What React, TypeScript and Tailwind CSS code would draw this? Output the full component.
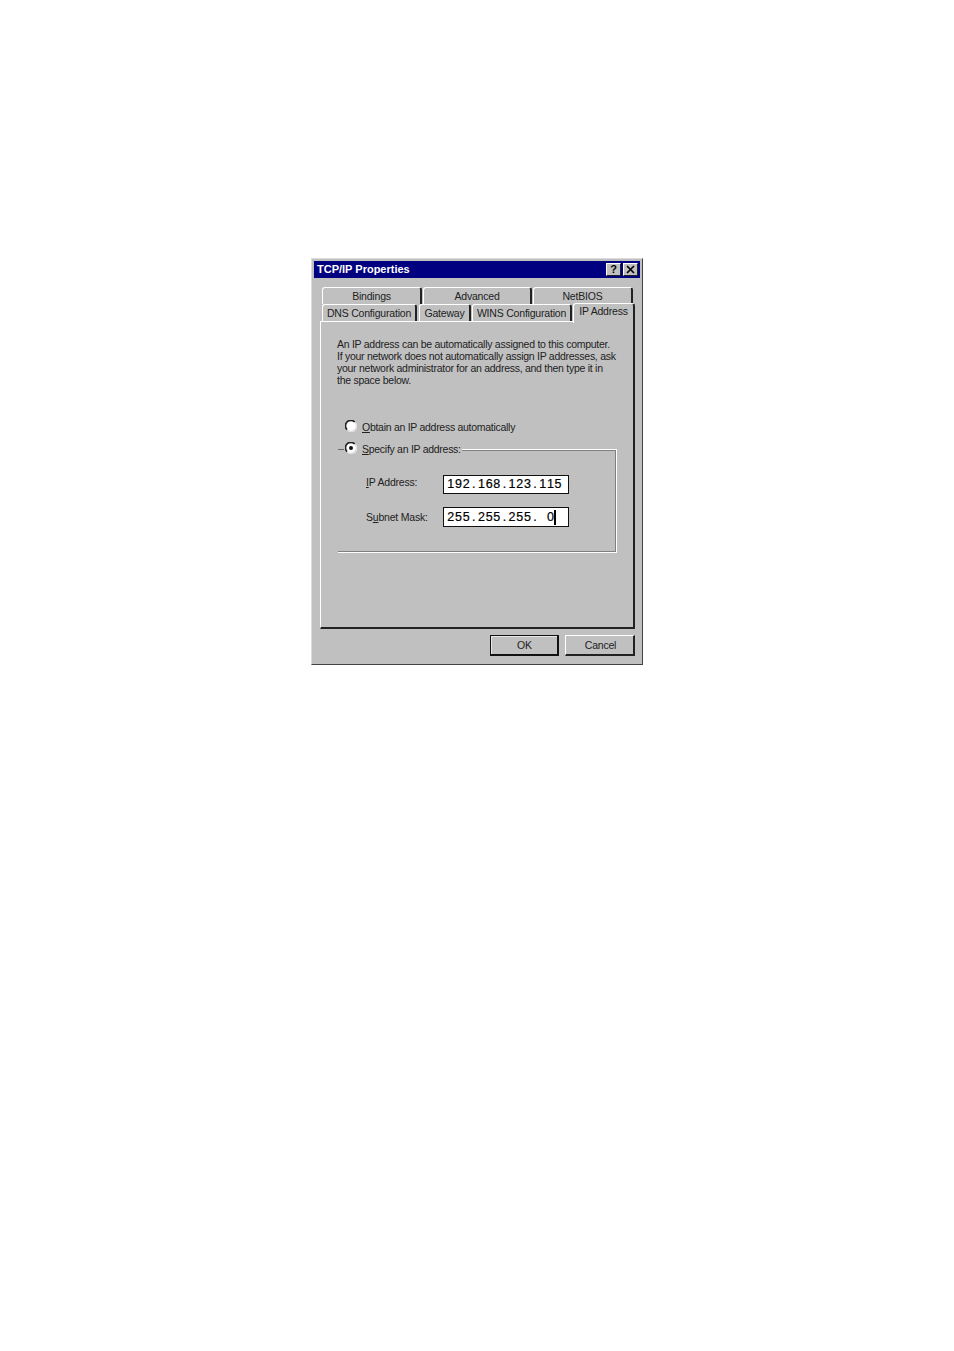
import React from "react";

function RowTab({ className, children }: { className: string; children: React.ReactNode }) {
  return (
    <div className={"flex shrink-0 justify-center whitespace-nowrap rounded-t-[3px] border-l border-r-2 border-t border-l-white border-r-[#222] border-t-white bg-[#c0c0c0] text-[10.5px] leading-none tracking-[-0.2px] text-[#222] " + className}>
      {children}
    </div>
  );
}

function Radio({ checked }: { checked?: boolean }) {
  return (
    <svg width="12" height="12" viewBox="0 0 12 12" className="-mt-[2px] shrink-0">
      <circle cx="6" cy="6" r="5" fill="#fff" />
      <path d="M2 9.6A5 5 0 0 1 9.6 2" fill="none" stroke="#222" strokeWidth="1.7" />
      <path d="M2.4 10.2A5 5 0 0 0 10.2 2.4" fill="none" stroke="#e4e4e4" strokeWidth="1.2" />
      {checked && <circle cx="6" cy="6" r="2" fill="#111" />}
    </svg>
  );
}

function IpValue({ value }: { value: string }) {
  return (
    <>
      {value.split("").map((c, i) => (
        <span key={i} className="inline-block w-[7.67px] text-center">{c === " " ? "\u00a0" : c}</span>
      ))}
    </>
  );
}

export default function App() {
  return (
    <div className="min-h-[1351px] bg-white pl-[311px] pt-[258px] font-['Liberation_Sans',Arial,sans-serif]">
      <div className="flex h-[407px] w-[332px] flex-col border border-b-[#444] border-l-[#dcdcdc] border-r-[#444] border-t-[#dcdcdc] bg-[#c0c0c0] px-[2px] pt-[2px]">
        <div className="flex h-[17px] shrink-0 items-center justify-between bg-[#000080] pl-[3px] pr-[2px]">
          <span className="text-[11px] font-bold leading-none text-white">TCP/IP Properties</span>
          <div className="flex gap-[2px]">
            <div className="flex h-[13px] w-[15px] items-center justify-center border border-b-[#222] border-l-white border-r-[#222] border-t-white bg-[#c0c0c0] text-[11px] font-bold leading-none text-black">?</div>
            <div className="flex h-[13px] w-[15px] items-center justify-center border border-b-[#222] border-l-white border-r-[#222] border-t-white bg-[#c0c0c0]">
              <svg width="9" height="9" viewBox="0 0 9 9"><path d="M1 1l7 7M8 1L1 8" stroke="#000" strokeWidth="1.7" /></svg>
            </div>
          </div>
        </div>

        <div className="ml-[8px] mt-[9px] flex h-[17px] shrink-0 gap-[1px]">
          <RowTab className="w-[100px] pt-[3px]">Bindings</RowTab>
          <RowTab className="w-[109px] pt-[3px]">Advanced</RowTab>
          <RowTab className="w-[100px] pt-[3px]">NetBIOS</RowTab>
        </div>
        <div className="relative z-10 ml-[8px] flex h-[17px] shrink-0 items-end">
          <RowTab className="h-[17px] w-[95px] pt-[3px]">DNS Configuration</RowTab>
          <RowTab className="ml-[2px] h-[17px] w-[52px] pt-[3px]">Gateway</RowTab>
          <RowTab className="ml-[1px] h-[17px] w-[100px] pt-[3px]">WINS Configuration</RowTab>
          <RowTab className="relative z-20 -mb-[2px] ml-[1px] h-[20px] w-[62px] pt-[2px]">IP Address</RowTab>
        </div>

        <div className="ml-[6px] flex h-[308px] w-[315px] shrink-0 flex-col border-b-2 border-l border-r-2 border-t border-b-[#222] border-l-white border-r-[#222] border-t-white pl-[16px] pt-[16px] text-[#222]">
          <p className="whitespace-nowrap text-[10.5px] leading-[12px] tracking-[-0.27px]">
            An IP address can be automatically assigned to this computer.<br />
            If your network does not automatically assign IP addresses, ask<br />
            your network administrator for an address, and then type it in<br />
            the space below.
          </p>
          <div className="ml-[8px] mt-[34px] flex h-[14px] items-center gap-[5px]">
            <Radio />
            <span className="whitespace-nowrap text-[10.5px] leading-[14px] tracking-[-0.28px]"><u>O</u>btain an IP address automatically</span>
          </div>
          <div className="relative ml-px mt-[15px] h-[104px] w-[279px] border border-l-0 border-white">
            <div className="h-full w-full border border-l-0 border-[#808080]">
              <div className="absolute -top-[8px] left-0 flex h-[14px] items-center bg-[#c0c0c0] pr-[1px]">
                <span className="h-px w-[6px] bg-[#666]" />
                <span className="ml-[1px] flex"><Radio checked /></span>
                <span className="ml-[5px] whitespace-nowrap text-[10.5px] leading-[14px] tracking-[-0.28px]"><u>S</u>pecify an IP address:</span>
              </div>
              <div className="ml-[28px] mt-[24px] flex items-center">
                <span className="-mt-[4px] w-[77px] whitespace-nowrap text-[10.5px] leading-none tracking-[-0.2px]"><u>I</u>P Address:</span>
                <div className="flex h-[19px] w-[126px] items-center whitespace-pre border border-[#111] bg-white pb-[1px] pl-[3px] text-[12.5px] leading-none text-black [-webkit-text-stroke:0.2px_black]"><IpValue value="192.168.123.115" /></div>
              </div>
              <div className="ml-[28px] mt-[13px] flex items-center">
                <span className="w-[77px] whitespace-nowrap text-[10.5px] leading-none tracking-[-0.2px]">S<u>u</u>bnet Mask:</span>
                <div className="flex h-[20px] w-[126px] items-center whitespace-pre border border-[#111] bg-white pl-[3px] text-[12.5px] leading-none text-black [-webkit-text-stroke:0.2px_black]"><IpValue value="255.255.255. 0" /><span className="h-[15px] w-[2px] bg-black" /></div>
              </div>
            </div>
          </div>
        </div>

        <div className="ml-[176px] mt-[6px] flex gap-[6px]">
          <div className="h-[21px] w-[69px] border border-b-2 border-r-2 border-[#111]">
            <div className="flex h-full w-full items-center justify-center border-l border-t border-l-[#e8e8e8] border-t-[#e8e8e8] text-[10.5px] text-[#222]">OK</div>
          </div>
          <div className="flex h-[21px] w-[70px] items-center justify-center border-b-2 border-l border-r-2 border-t border-b-[#222] border-l-white border-r-[#222] border-t-white pl-[2px] pt-[1px] text-[10.5px] tracking-[-0.2px] text-[#222]">Cancel</div>
        </div>
      </div>
    </div>
  );
}
